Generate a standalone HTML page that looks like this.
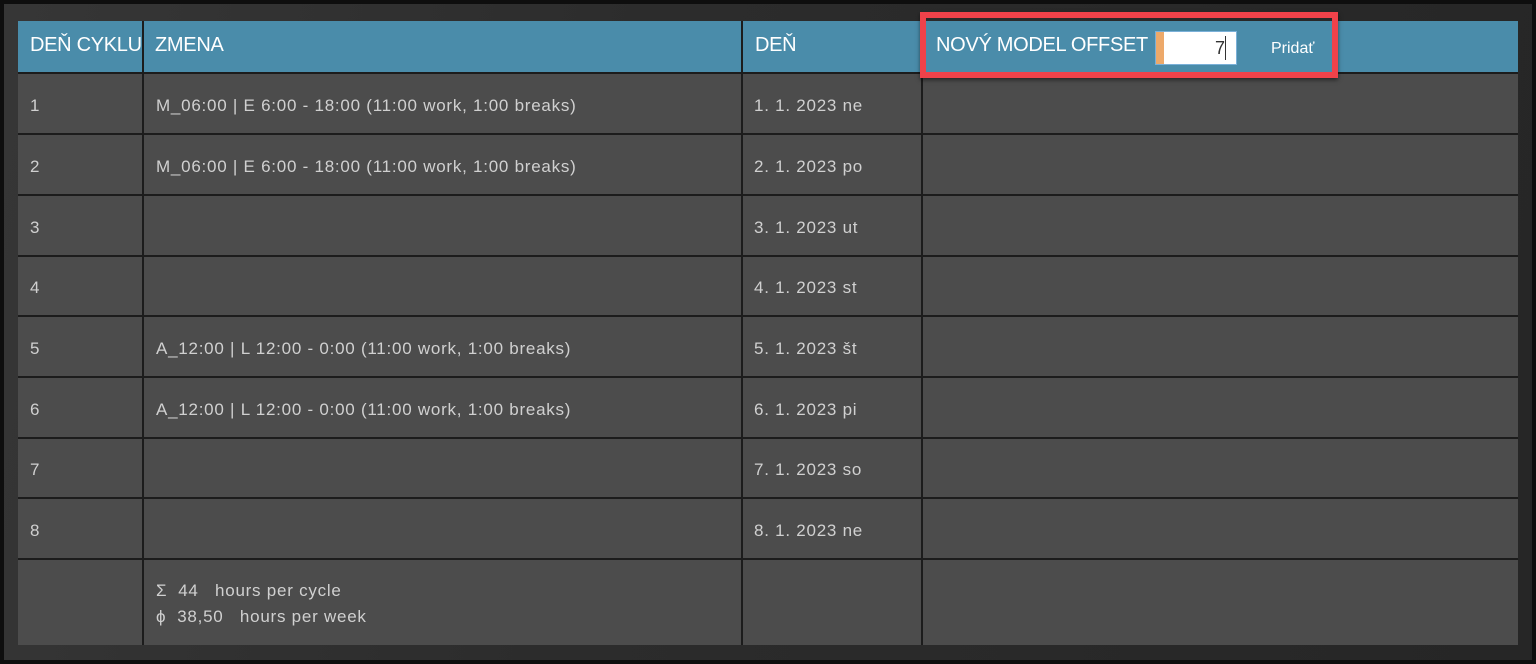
<!DOCTYPE html>
<html><head><style>
*{margin:0;padding:0;box-sizing:border-box}
body{width:1536px;height:664px;background:#0e0e0e;position:relative;overflow:hidden;font-family:"Liberation Sans",sans-serif}
.bg{position:absolute;left:4px;top:4px;width:1528px;height:656px;background:linear-gradient(100deg,#363636 0%,#2c2c2c 40%,#262626 100%)}
.t{position:absolute;left:18px;top:21px;width:1500px;height:624px;background:#4c4c4c}
.hd{position:absolute;left:0;top:0;width:1500px;height:51px;background:#4a8caa}
.vl{position:absolute;top:0;width:2px;height:624px;background:#1c1c1c}
.hl{position:absolute;left:0;width:1500px;height:2px;background:#1c1c1c}
.h{position:absolute;color:#fff;font-size:20px;top:13px;letter-spacing:-0.3px}
.c{position:absolute;color:#d0d0d0;font-size:17px;letter-spacing:0.45px}
.w{letter-spacing:0.75px}
.red{position:absolute;left:920px;top:12px;width:418px;height:66px;border:6px solid #f0424a;box-shadow:0 2px 4px rgba(0,0,0,.5)}
</style></head><body>
<div class="bg"></div>
<div class="t">
<div class="hd"></div>
<div class="vl" style="left:124px"></div>
<div class="vl" style="left:723px"></div>
<div class="vl" style="left:903px"></div>
<div class="hl" style="top:51px"></div>
<div class="hl" style="top:112px"></div>
<div class="hl" style="top:173px"></div>
<div class="hl" style="top:234px"></div>
<div class="hl" style="top:294px"></div>
<div class="hl" style="top:355px"></div>
<div class="hl" style="top:416px"></div>
<div class="hl" style="top:476px"></div>
<div class="hl" style="top:537px"></div>
<div class="h" style="left:12px">DEŇ CYKLU</div>
<div class="h" style="left:137px">ZMENA</div>
<div class="h" style="left:737px">DEŇ</div>
<div class="h" style="left:918px">NOVÝ MODEL OFFSET</div>
<div style="position:absolute;left:1137px;top:10px;width:82px;height:34px;background:#fff;border:1px solid #7ab0d8"></div>
<div style="position:absolute;left:1138px;top:11px;width:8px;height:32px;background:#eda96a"></div>
<div style="position:absolute;left:1197px;top:17px;font-size:18px;color:#333">7</div>
<div style="position:absolute;left:1207px;top:15px;width:1px;height:24px;background:#333"></div>
<div style="position:absolute;left:1253px;top:19px;font-size:16px;color:#fff">Pridať</div>

<div class="c" style="left:12px;top:75px">1</div>
<div class="c" style="left:12px;top:136px">2</div>
<div class="c" style="left:12px;top:197px">3</div>
<div class="c" style="left:12px;top:257px">4</div>
<div class="c" style="left:12px;top:318px">5</div>
<div class="c" style="left:12px;top:379px">6</div>
<div class="c" style="left:12px;top:439px">7</div>
<div class="c" style="left:12px;top:500px">8</div>
<div class="c w" style="left:138px;top:75px">M_06:00 | E 6:00 - 18:00 (11:00 work, 1:00 breaks)</div>
<div class="c w" style="left:138px;top:136px">M_06:00 | E 6:00 - 18:00 (11:00 work, 1:00 breaks)</div>
<div class="c w" style="left:138px;top:318px">A_12:00 | L 12:00 - 0:00 (11:00 work, 1:00 breaks)</div>
<div class="c w" style="left:138px;top:379px">A_12:00 | L 12:00 - 0:00 (11:00 work, 1:00 breaks)</div>
<div class="c w" style="left:736px;top:75px">1. 1. 2023 ne</div>
<div class="c w" style="left:736px;top:136px">2. 1. 2023 po</div>
<div class="c w" style="left:736px;top:197px">3. 1. 2023 ut</div>
<div class="c w" style="left:736px;top:257px">4. 1. 2023 st</div>
<div class="c w" style="left:736px;top:318px">5. 1. 2023 št</div>
<div class="c w" style="left:736px;top:379px">6. 1. 2023 pi</div>
<div class="c w" style="left:736px;top:439px">7. 1. 2023 so</div>
<div class="c w" style="left:736px;top:500px">8. 1. 2023 ne</div>
<div class="c w" style="left:138px;top:560px">Σ&nbsp; 44&nbsp;&nbsp; hours per cycle</div>
<div class="c w" style="left:138px;top:586px">ϕ&nbsp; 38,50&nbsp;&nbsp; hours per week</div>
</div>
<div class="red"></div>
</body></html>
